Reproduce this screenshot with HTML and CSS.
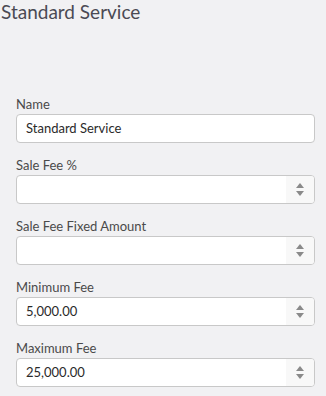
FILE: index.html
```html
<!DOCTYPE html>
<html>
<head>
<meta charset="utf-8">
<link rel="stylesheet" href="styles.css">
</head>
<body>
<h1 class="title">Standard Service</h1>
<form class="form">
  <div class="field">
    <label class="label">Name</label>
    <div class="input"><span class="value">Standard Service</span></div>
  </div>
  <div class="field">
    <label class="label">Sale Fee %</label>
    <div class="input"><span class="value"></span><span class="spin"><span class="up"></span><span class="down"></span></span></div>
  </div>
  <div class="field">
    <label class="label">Sale Fee Fixed Amount</label>
    <div class="input"><span class="value"></span><span class="spin"><span class="up"></span><span class="down"></span></span></div>
  </div>
  <div class="field">
    <label class="label">Minimum Fee</label>
    <div class="input"><span class="value">5,000.00</span><span class="spin"><span class="up"></span><span class="down"></span></span></div>
  </div>
  <div class="field">
    <label class="label">Maximum Fee</label>
    <div class="input"><span class="value">25,000.00</span><span class="spin"><span class="up"></span><span class="down"></span></span></div>
  </div>
</form>
</body>
</html>
```
FILE: styles.css
```css
html, body {
  margin: 0;
  padding: 0;
  background: #f1f1f3;
  font-family: Lato, "Open Sans", sans-serif;
  color: #444;
}
.title {
  margin: 0;
  padding: 0 0 0 1px;
  font-size: 19px;
  font-weight: 400;
  line-height: 24px;
  color: #4a4a54;
}
.form {
  padding: 72px 11px 0 16px;
  display: flex;
  flex-direction: column;
  gap: 14px;
}
.field {
  display: flex;
  flex-direction: column;
  gap: 2px;
}
.label {
  font-size: 13px;
  line-height: 16px;
  color: #4a4a4a;
}
.input {
  height: 29px;
  box-sizing: border-box;
  border: 1px solid #c8c8c8;
  border-radius: 4px;
  background: #fff;
  display: flex;
  align-items: stretch;
  overflow: hidden;
}
.value {
  flex: 1;
  padding-left: 9px;
  font-size: 13px;
  line-height: 27px;
  color: #2a2a2a;
}
.spin {
  width: 28px;
  background: #f8f8f8;
  display: flex;
  flex-direction: column;
  align-items: center;
  justify-content: center;
  gap: 3px;
}
.up, .down {
  width: 0;
  height: 0;
  border-left: 4px solid transparent;
  border-right: 4px solid transparent;
}
.up { border-bottom: 5px solid #8a8a8a; }
.down { border-top: 5px solid #8a8a8a; }
```
